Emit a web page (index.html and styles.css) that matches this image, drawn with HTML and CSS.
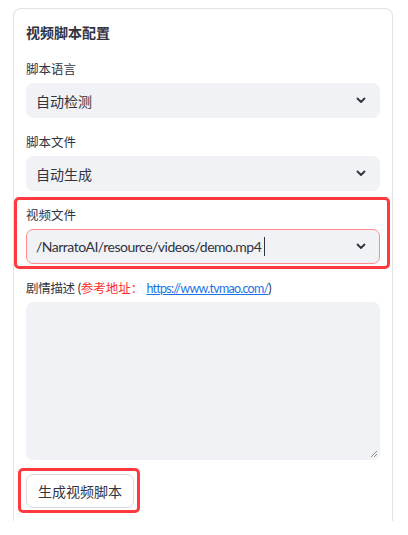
FILE: index.html
```html
<!DOCTYPE html>
<html lang="zh">
<head>
<meta charset="utf-8">
<link rel="stylesheet" href="styles.css">
</head>
<body>
<div class="card">
  <div class="title">视频脚本配置</div>

  <div class="field">
    <div class="label">脚本语言</div>
    <div class="select">
      <span class="value">自动检测</span>
      <svg class="chev" width="10" height="7" viewBox="0 0 10 7"><path d="M1.5 1.5 L5 5 L8.5 1.5" fill="none" stroke="#31333f" stroke-width="1.8" stroke-linecap="round" stroke-linejoin="round"/></svg>
    </div>
  </div>

  <div class="field">
    <div class="label">脚本文件</div>
    <div class="select">
      <span class="value">自动生成</span>
      <svg class="chev" width="10" height="7" viewBox="0 0 10 7"><path d="M1.5 1.5 L5 5 L8.5 1.5" fill="none" stroke="#31333f" stroke-width="1.8" stroke-linecap="round" stroke-linejoin="round"/></svg>
    </div>
  </div>

  <div class="field marked">
    <div class="label">视频文件</div>
    <div class="select focused">
      <span class="value latin">/NarratoAI/resource/videos/demo.mp4<span class="caret"></span></span>
      <svg class="chev" width="10" height="7" viewBox="0 0 10 7"><path d="M1.5 1.5 L5 5 L8.5 1.5" fill="none" stroke="#31333f" stroke-width="1.8" stroke-linecap="round" stroke-linejoin="round"/></svg>
    </div>
  </div>

  <div class="field">
    <div class="label"><span class="paren">剧情描述 (</span><span class="hint">参考地址：</span> <a class="link" href="#">https://www.tvmao.com/</a>)</div>
    <div class="textarea">
      <svg class="grip" width="8" height="8" viewBox="0 0 8 8"><path d="M7 1 L1 7 M7 4 L4 7" stroke="#8a8c94" stroke-width="1" fill="none"/></svg>
    </div>
  </div>

  <div class="btn-wrap marked">
    <button class="btn">生成视频脚本</button>
  </div>
</div>
</body>
</html>
```
FILE: styles.css
```css
* { box-sizing: border-box; }
html, body { margin: 0; padding: 0; background: #fff; }
body {
  font-family: "Lato", "Noto Sans CJK SC", sans-serif;
  color: #31333f;
}
.card {
  margin: 8px 0 0 13px;
  width: 380px;
  height: 513px;
  border: 1px solid #e3e3e6;
  border-bottom: none;
  border-radius: 8px 8px 0 0;
  padding: 14px 12px 0 12px;
  display: flex;
  flex-direction: column;
}
.title {
  font-size: 14px;
  font-weight: 700;
  line-height: 20px;
  margin-bottom: 17px;
}
.field { position: relative; margin-bottom: 15px; }
.label {
  font-size: 12.5px;
  line-height: 20px;
  margin-bottom: 3px;
  color: #31333f;
}
.paren { letter-spacing: -0.3px; }
.select {
  height: 35px;
  background: #f0f2f6;
  border: 1px solid #f0f2f6;
  border-radius: 7px;
  display: flex;
  align-items: center;
  justify-content: space-between;
  padding: 0 13px 0 9px;
}
.select.focused { border-color: #ff8c8f; }
.value { font-size: 14px; color: #31333f; display: flex; align-items: center; }
.value.latin { font-size: 14px; letter-spacing: -0.5px; }
.caret { display: inline-block; width: 1px; height: 19px; background: #31333f; margin-left: 3px; }
.chev { display: block; }
.marked::after {
  content: "";
  position: absolute;
  border: 3px solid #ff3a3f;
  border-radius: 5px;
  pointer-events: none;
}
.field.marked::after { left: -12px; right: -10px; top: -9px; bottom: -5px; }
.hint { color: #ff2b2b; }
.link { color: #1a73e8; text-decoration: underline; letter-spacing: -0.75px; }
.textarea {
  height: 158px;
  background: #f0f2f6;
  border-radius: 7px;
  position: relative;
}
.grip { position: absolute; right: 2px; bottom: 2px; }
.btn-wrap { position: relative; align-self: flex-start; margin-top: -1px; }
.btn-wrap.marked::after { left: -8px; right: -6px; top: -6px; bottom: -5px; }
.btn {
  height: 34px;
  padding: 0 11px;
  background: #fff;
  border: 1px solid #d9d9de;
  border-radius: 7px;
  font-family: "Lato", "Noto Sans CJK SC", sans-serif;
  font-size: 14px;
  color: #31333f;
}
```
